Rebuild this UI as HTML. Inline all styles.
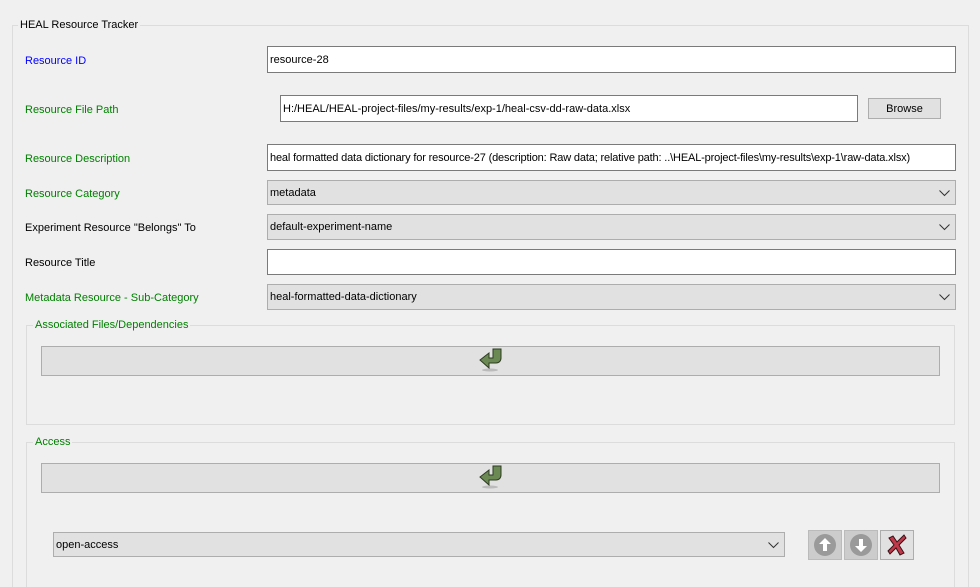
<!DOCTYPE html>
<html><head><style>
*{box-sizing:border-box}
html,body{margin:0;width:980px;height:587px;overflow:hidden}
body{background:#f0f0f0;font-family:"Liberation Sans","DejaVu Sans",sans-serif;font-size:11px;color:#000;position:relative}
.a{position:absolute}
.frame{position:absolute;border:1px solid #dcdcdc}
.leg{position:absolute;background:#f0f0f0;padding:0 2px;line-height:14px}
.lbl{position:absolute;line-height:14px}
.g{color:#008000}.b{color:#0000ff}
.inp{position:absolute;background:#fff;border:1px solid #7a7a7a;padding-left:2px;line-height:26px;white-space:nowrap;overflow:hidden}
.cmb{position:absolute;background:#e1e1e1;border:1px solid #adadad;padding-left:2px;line-height:24px;white-space:nowrap}
.cmb svg{position:absolute;right:5px;top:9px}
.bar{position:absolute;background:#e1e1e1;border:1px solid #adadad}
.btn{position:absolute;background:#e1e1e1;border:1px solid #adadad;text-align:center}
</style></head><body>
<div class="frame" style="left:12px;top:25px;width:957px;height:580px"></div>
<div class="leg" style="left:18px;top:18px;">HEAL Resource Tracker</div>

<div class="lbl b" style="left:25px;top:54px">Resource ID</div>
<div class="inp" style="left:267px;top:46px;width:689px;height:27px">resource-28</div>

<div class="lbl g" style="left:25px;top:103px">Resource File Path</div>
<div class="inp" style="left:280px;top:95px;width:578px;height:27px">H:/HEAL/HEAL-project-files/my-results/exp-1/heal-csv-dd-raw-data.xlsx</div>
<div class="btn" style="left:868px;top:98px;width:73px;height:21px;line-height:20px">Browse</div>

<div class="lbl g" style="left:25px;top:152px">Resource Description</div>
<div class="inp" style="left:267px;top:144px;width:689px;height:27px;letter-spacing:-0.15px">heal formatted data dictionary for resource-27 (description: Raw data; relative path: ..\HEAL-project-files\my-results\exp-1\raw-data.xlsx)</div>

<div class="lbl g" style="left:25px;top:187px">Resource Category</div>
<div class="cmb" style="left:267px;top:180px;width:689px;height:25px">metadata<svg width="11" height="7"><path d="M0.5 0.5L5.5 5.5L10.5 0.5" fill="none" stroke="#333"/></svg></div>

<div class="lbl" style="left:25px;top:221px">Experiment Resource "Belongs" To</div>
<div class="cmb" style="left:267px;top:214px;width:689px;height:26px">default-experiment-name<svg width="11" height="7"><path d="M0.5 0.5L5.5 5.5L10.5 0.5" fill="none" stroke="#333"/></svg></div>

<div class="lbl" style="left:25px;top:256px">Resource Title</div>
<div class="inp" style="left:267px;top:249px;width:689px;height:26px"></div>

<div class="lbl g" style="left:25px;top:291px">Metadata Resource - Sub-Category</div>
<div class="cmb" style="left:267px;top:284px;width:689px;height:26px">heal-formatted-data-dictionary<svg width="11" height="7"><path d="M0.5 0.5L5.5 5.5L10.5 0.5" fill="none" stroke="#333"/></svg></div>

<div class="frame" style="left:26px;top:325px;width:929px;height:100px"></div>
<div class="leg g" style="left:33px;top:318px">Associated Files/Dependencies</div>
<div class="bar" style="left:41px;top:346px;width:899px;height:30px"></div>
<svg class="a" style="left:478px;top:348px" width="26" height="26" viewBox="0 0 26 26"><ellipse cx="12" cy="22" rx="8" ry="1.5" fill="#bbb"/><path d="M15 1h8v9c0 3-2 5-5 5h-7v5l-9-8 9-7v5h4z" fill="#6b8a53" stroke="#2d3a22" stroke-width="1"/></svg>

<div class="frame" style="left:26px;top:442px;width:929px;height:160px"></div>
<div class="leg g" style="left:33px;top:435px">Access</div>
<div class="bar" style="left:41px;top:463px;width:899px;height:30px"></div>
<svg class="a" style="left:478px;top:465px" width="26" height="26" viewBox="0 0 26 26"><ellipse cx="12" cy="22" rx="8" ry="1.5" fill="#bbb"/><path d="M15 1h8v9c0 3-2 5-5 5h-7v5l-9-8 9-7v5h4z" fill="#6b8a53" stroke="#2d3a22" stroke-width="1"/></svg>

<div class="cmb" style="left:53px;top:532px;width:732px;height:25px">open-access<svg width="11" height="7"><path d="M0.5 0.5L5.5 5.5L10.5 0.5" fill="none" stroke="#333"/></svg></div>

<div class="btn" style="left:808px;top:530px;width:34px;height:30px;background:#ccc;border-color:#bbb"><svg width="26" height="26" style="margin-top:1px" viewBox="0 0 26 26"><circle cx="13" cy="13" r="11" fill="#9a9a9a"/><path d="M13 6l-6 6h4v7h4v-7h4z" fill="#fff"/></svg></div>
<div class="btn" style="left:844px;top:530px;width:34px;height:30px;background:#ccc;border-color:#bbb"><svg width="26" height="26" style="margin-top:1px" viewBox="0 0 26 26"><circle cx="13" cy="13" r="11" fill="#9a9a9a"/><path d="M13 20l-6-6h4V7h4v7h4z" fill="#fff"/></svg></div>
<div class="btn" style="left:880px;top:530px;width:34px;height:30px"><svg width="26" height="26" style="margin-top:1px" viewBox="0 0 26 26"><path d="M5 6l4-2 4 6 7-7 2 3-7 7 5 8-4 2-4-7-6 6-2-3 6-6z" fill="#c0394a" stroke="#3a1015" stroke-width="1"/></svg></div>
</body></html>
